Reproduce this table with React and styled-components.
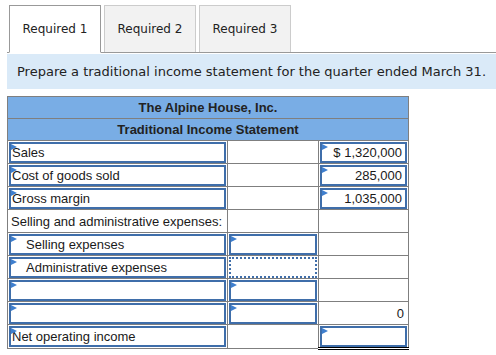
import React from 'react';
import styled, { createGlobalStyle } from 'styled-components';

const Global = createGlobalStyle`
  body {
    margin: 0;
    background: #fff;
    font-family: "DejaVu Sans", Verdana, sans-serif;
  }
`;

const Page = styled.div`
  width: 496px;
  height: 355px;
  overflow: hidden;
  padding: 5px 0 0 7px;
  box-sizing: border-box;
`;

const TabBar = styled.div`
  display: flex;
  gap: 3px;
  padding-left: 2px;
  border-bottom: 1px solid #999;
  height: 47px;
`;

const Tab = styled.div`
  width: 92px;
  box-sizing: border-box;
  display: flex;
  align-items: center;
  justify-content: center;
  font-size: 12px;
  color: #222;
  background: ${p => (p.active ? '#fff' : '#f2f2f2')};
  border: 1px solid ${p => (p.active ? '#999' : '#ccc')};
  border-bottom: ${p => (p.active ? '1px solid #fff' : 'none')};
  margin-bottom: ${p => (p.active ? '-1px' : '0')};
`;

const Prompt = styled.div`
  margin-top: 1px;
  background: #daeaf8;
  height: 35px;
  display: flex;
  align-items: center;
  padding-left: 10px;
  font-size: 13px;
  color: #222;
`;

const Table = styled.table`
  margin-top: 7px;
  border-collapse: collapse;
  table-layout: fixed;
  width: 401px;
  font-family: "Liberation Sans", Arial, sans-serif;
  font-size: 13px;
  color: #1a1a1a;
`;

const Head = styled.td`
  background: #79ade5;
  border: 1px solid #7f7f7f;
  height: 21px;
  padding: 0;
  text-align: center;
  font-weight: bold;
  color: #222;
`;

const Cell = styled.td`
  border: 1px solid #7f7f7f;
  border-top-color: ${p => (p.rule ? '#000' : '#7f7f7f')};
  border-bottom: ${p => (p.double ? '3px double #000' : '1px solid #7f7f7f')};
  height: 22px;
  padding: 0;
  vertical-align: middle;
`;

const Box = styled.div`
  position: relative;
  box-sizing: border-box;
  height: 21px;
  margin: 0 1px;
  border: 2px ${p => (p.dotted ? 'dotted' : 'solid')} #3f6eaa;
  display: flex;
  align-items: center;
  justify-content: ${p => (p.right ? 'flex-end' : 'flex-start')};
  padding: ${p => (p.right ? '0 3px 0 0' : `0 0 0 ${p.indent ? 15 : 1}px`)};
  white-space: nowrap;
`;

const Marker = styled.span`
  position: absolute;
  left: 0;
  top: 0;
  width: 0;
  height: 0;
  border-top: 3px solid transparent;
  border-bottom: 3px solid transparent;
  border-left: 6px solid #3f7fce;
`;

const Plain = styled.div`
  height: 21px;
  display: flex;
  align-items: center;
  justify-content: ${p => (p.right ? 'flex-end' : 'flex-start')};
  padding: ${p => (p.right ? '0 4px 0 0' : '0 0 0 3px')};
  white-space: nowrap;
`;

function Input({ children, marker, ...rest }) {
  return (
    <Box {...rest}>
      {marker && <Marker />}
      {children}
    </Box>
  );
}

const rows = [
  { label: 'Sales', b: '$ 1,320,000', bInput: true },
  { label: 'Cost of goods sold', b: '285,000', bInput: true },
  { label: 'Gross margin', b: '1,035,000', bInput: true, rule: true },
  { label: 'Selling and administrative expenses:', plain: true },
  { label: 'Selling expenses', indent: true, aInput: true },
  { label: 'Administrative expenses', indent: true, aInput: true, dotted: true, noMarkA: true },
  { label: '', aInput: true },
  { label: '', aInput: true, b: '0' },
  { label: 'Net operating income', bInput: true, rule: true, double: true },
];

export default function App() {
  return (
    <Page>
      <Global />
      <TabBar>
        <Tab active>Required 1</Tab>
        <Tab>Required 2</Tab>
        <Tab>Required 3</Tab>
      </TabBar>
      <Prompt>Prepare a traditional income statement for the quarter ended March 31.</Prompt>
      <Table>
        <colgroup>
          <col style={{ width: 220 }} />
          <col style={{ width: 91 }} />
          <col style={{ width: 90 }} />
        </colgroup>
        <tbody>
          <tr><Head colSpan={3}>The Alpine House, Inc.</Head></tr>
          <tr><Head colSpan={3}>Traditional Income Statement</Head></tr>
          {rows.map((r, i) => (
            <tr key={i}>
              <Cell>
                {r.plain ? (
                  <Plain>{r.label}</Plain>
                ) : (
                  <Input marker indent={r.indent}>{r.label}</Input>
                )}
              </Cell>
              <Cell>
                {r.aInput ? (
                  <Input marker={!r.noMarkA} dotted={r.dotted} />
                ) : null}
              </Cell>
              <Cell rule={r.rule} double={r.double}>
                {r.bInput ? (
                  <Input marker right>{r.b}</Input>
                ) : (
                  <Plain right>{r.b}</Plain>
                )}
              </Cell>
            </tr>
          ))}
        </tbody>
      </Table>
    </Page>
  );
}
